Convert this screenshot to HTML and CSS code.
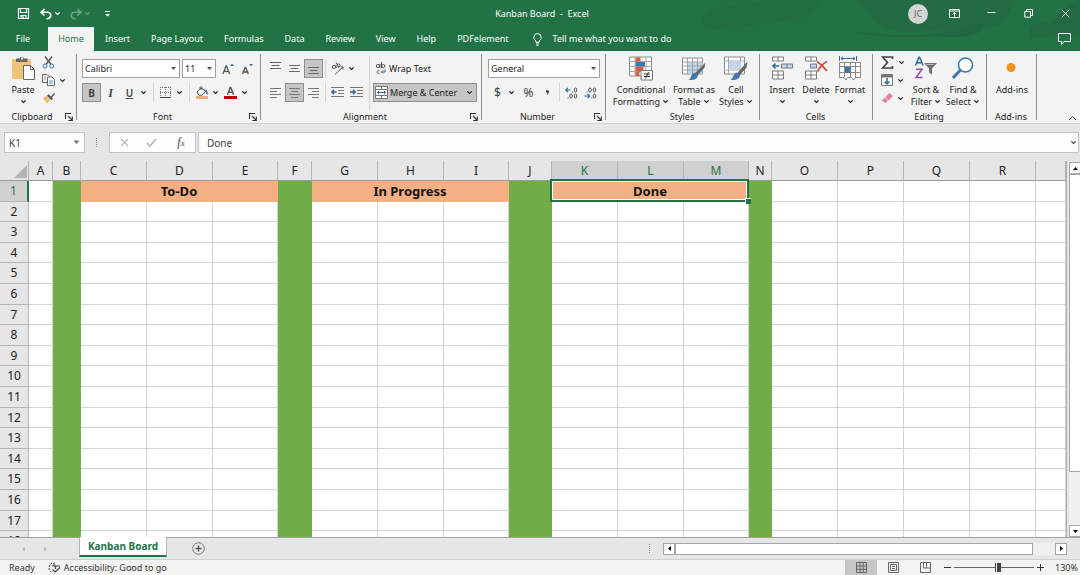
FILE: index.html
```html
<!DOCTYPE html>
<html lang="en">
<head>
<meta charset="utf-8">
<title>Kanban Board - Excel</title>
<link rel="stylesheet" href="styles.css">
</head>
<body>
<svg class="sprite" aria-hidden="true">
  <symbol id="chev" viewBox="0 0 7 7"><path d="M1.300 2.300 3.500 4.500 5.700 2.300" fill="none" stroke="currentColor" stroke-width="1.200"/></symbol>
  <symbol id="tri" viewBox="0 0 7 7"><path d="M1 2h5L3.500 5z" fill="currentColor"/></symbol>
  <symbol id="launch" viewBox="0 0 8 8"><path d="M.5 6V.5H6M3 3l4 4M7.300 3.500v4h-4" fill="none" stroke="#333" stroke-width="1.100"/></symbol>
</svg>

<header class="top">
  <svg class="swirl" viewBox="0 0 400 50" aria-hidden="true">
    <path d="M24 28C18 5 40 8 60 5L90 0h50c-10 10 0 16-25 20S60 26 24 31z" fill="#216e43"/>
    <path d="M174 0h160l-8 20c-20 16-60 8-96 12-24 0-42-12-38-18z" fill="#236b42"/>
    <path d="M172 31c30 5 70 6 90 1 18-7 38-9 40-9 6 5-4 13-22 14H222c-20-1-42-3-50-6z" fill="#206841"/>
    <path d="M350 38c-3-16 14-20 20-12 10-12 12-20 30-26v36c-20-4-30 3-50 2z" fill="#236b42"/>
  </svg>
  <div class="titlebar">
    <div class="quick">
      <button aria-label="Save"><svg width="13" height="13" viewBox="0 0 13 13" fill="none" stroke="#fff" stroke-width="1.200"><path d="M1.500 1.500h10v10h-10zM3.500 1.500v4h6v-4M4 11.500v-3h5v3M6 9v2"/></svg></button>
      <button aria-label="Undo"><svg width="14" height="12" viewBox="0 0 14 12" fill="none" stroke="#fff" stroke-width="1.600"><path d="M5.500 1 2 4.300l3.500 3.200M2 4.300h6.500c4.500 0 4.500 6-1 6.500"/></svg><svg class="chev"><use href="#chev"/></svg></button>
      <button class="faded" aria-label="Redo"><svg width="14" height="12" viewBox="0 0 14 12" fill="none" stroke="#fff" stroke-width="1.600"><path d="M8.500 1 12 4.300 8.500 7.500M12 4.300H5.500C1 4.300 1 10.300 6.500 10.800"/></svg><svg class="chev"><use href="#chev"/></svg></button>
      <button aria-label="Customize quick access"><svg width="7" height="8" viewBox="0 0 7 8"><path d="M1 1.500h5" stroke="#fff"/><path d="M1 4h5L3.500 6.500z" fill="#fff"/></svg></button>
    </div>
    <h1>Kanban Board &nbsp;- &nbsp;Excel</h1>
    <div class="window">
      <button class="avatar">JC</button>
      <button aria-label="Ribbon display"><svg width="11" height="9" viewBox="0 0 11 9" fill="none" stroke="#fff"><path d="M.5.500h10v8H.5zM.5 2h10M5.500 7.500v-4M3.700 5.200l1.800-1.700 1.800 1.700"/></svg></button>
      <button aria-label="Minimize"><svg width="9" height="9" viewBox="0 0 9 9"><path d="M.5 3.500h8" stroke="#fff"/></svg></button>
      <button aria-label="Restore"><svg width="9" height="9" viewBox="0 0 9 9" fill="none" stroke="#fff"><path d="M.8 2.500h5.700v5.700H.8zM2.500 2.500v-2h6v6h-2"/></svg></button>
      <button aria-label="Close"><svg width="9" height="9" viewBox="0 0 9 9"><path d="m.7.700 7.600 7.600M8.300.7.700 8.300" stroke="#fff"/></svg></button>
    </div>
  </div>
  <nav class="tabs">
    <button class="file">File</button>
    <button class="active">Home</button>
    <button>Insert</button>
    <button>Page Layout</button>
    <button>Formulas</button>
    <button>Data</button>
    <button>Review</button>
    <button>View</button>
    <button>Help</button>
    <button>PDFelement</button>
    <button class="tell"><svg width="9" height="13" viewBox="0 0 9 13" fill="none" stroke="#fff"><path d="M3 9.500V8C1.500 6.800.8 6 .8 4.300a3.700 3.700 0 0 1 7.400 0C8.200 6 7.500 6.800 6 8v1.500zM3 11h3M3.500 12.500h2"/></svg>Tell me what you want to do</button>
    <button class="comment" aria-label="Comments"><svg width="13" height="12" viewBox="0 0 13 12" fill="none" stroke="#fff"><path d="M.5.500h12v8H6l-2.500 3v-3h-3z"/></svg></button>
  </nav>
</header>

<section class="ribbon">
  <div class="group clipboard">
    <div class="tools">
      <button class="big paste"><svg width="24" height="25" viewBox="0 0 24 25"><path d="M1 3h19v20H1z" fill="#efc476"/><path d="M5 6V2.500h3.500a2.300 2.300 0 0 1 4.500 0h3.500V6z" fill="#666"/><path d="M10 1.500h2v2h-2z" fill="#f3f3f3"/><path d="M12.500 9.500h7l4 4v10h-11z" fill="#fff" stroke="#666"/><path d="M19.500 9.500v4h4" fill="none" stroke="#666"/></svg><span>Paste</span><svg class="chev"><use href="#chev"/></svg></button>
      <div class="stack">
        <button aria-label="Cut"><svg width="13" height="13" viewBox="0 0 13 13" fill="none"><path d="M3 .500 9 8.500M10 .500 4 8.500" stroke="#555" stroke-width="1.400"/><circle cx="3" cy="10" r="2" stroke="#41719c"/><circle cx="9.800" cy="10" r="2" stroke="#41719c"/></svg></button>
        <button aria-label="Copy"><svg width="13" height="12" viewBox="0 0 13 12" fill="#fff" stroke="#666"><path d="M.5.500H5l2 2v6H.5z"/><path d="M5.500 3h4.500l2.500 2.500v6h-7z"/><path d="M7 7h4M7 9h4M2 3h2M2 5h2" stroke="#5b87b5"/></svg><svg class="chev"><use href="#chev"/></svg></button>
        <button aria-label="Format Painter"><svg width="13" height="12" viewBox="0 0 13 12"><path d="m1 6 4-2.500L8.500 8 5 11.500z" fill="#e9bd74"/><path d="m5 3.500 1.500-1.300L9 4.500 12 1l1 1-3 3.500 1 1.500-2 1z" fill="#555"/></svg></button>
      </div>
    </div>
    <footer><span>Clipboard</span><button aria-label="Clipboard options"><svg class="launch"><use href="#launch"/></svg></button></footer>
  </div>

  <div class="group font">
    <div class="tools rows">
      <div class="row">
        <div class="drop name"><select aria-label="Font"><option>Calibri</option></select><svg class="tri"><use href="#tri"/></svg></div>
        <div class="drop size"><select aria-label="Font size"><option>11</option></select><svg class="tri"><use href="#tri"/></svg></div>
        <button class="ic" aria-label="Increase font size"><svg width="12" height="12" viewBox="0 0 12 12" fill="none"><path d="M1 11 4 3h.6L7.600 11M2.300 8.300h4" stroke="#555" stroke-width="1.300"/><path d="M8 3h4L10 .800z" fill="#41719c"/></svg></button>
        <button class="ic" aria-label="Decrease font size"><svg width="12" height="12" viewBox="0 0 12 12" fill="none"><path d="M1.500 11 4.200 4.500h.5L7.400 11M2.700 9h3.600" stroke="#555" stroke-width="1.300"/><path d="M8 1h4l-2 2.200z" fill="#41719c"/></svg></button>
      </div>
      <div class="row">
        <button class="ic on"><b>B</b></button>
        <button class="ic serif"><i>I</i></button>
        <button class="ic"><u>U</u></button><button class="more" aria-label="Underline options"><svg class="chev"><use href="#chev"/></svg></button>
        <span class="sep"></span>
        <button class="ic" aria-label="Borders"><svg width="11" height="11" viewBox="0 0 11 11" fill="none" stroke="#777"><path d="M.5 0v10M5.500 0v10M10.500 0v10M0 .500h11M0 5.500h11" stroke-dasharray="1 1"/><path d="M0 10.500h11" stroke="#444"/></svg></button><button class="more" aria-label="Border options"><svg class="chev"><use href="#chev"/></svg></button>
        <span class="sep"></span>
        <button class="ic" aria-label="Fill color"><svg width="14" height="13" viewBox="0 0 14 13"><path d="m2 6 4-4 4.500 3.500L7 9.200H4z" fill="#fff" stroke="#555"/><path d="M5 4V1.500c0-1 2-1 2 0V4" fill="none" stroke="#555"/><path d="M9 3.500c3 0 4 2 3.800 5.500-1.700-1-2-3-3.800-5.500z" fill="#41719c"/><path d="M1 10h12v3H1z" fill="#eaae87"/></svg></button><button class="more" aria-label="Fill options"><svg class="chev"><use href="#chev"/></svg></button>
        <button class="ic next" aria-label="Font color"><svg width="13" height="13" viewBox="0 0 13 13"><path d="M3.500 8.700 6.200 1.500h.6l2.700 7.200M4.500 6.400h4" fill="none" stroke="#555" stroke-width="1.400"/><path d="M0 10h13v3H0z" fill="#c00000"/></svg></button><button class="more" aria-label="Font color options"><svg class="chev"><use href="#chev"/></svg></button>
      </div>
    </div>
    <footer><span>Font</span><button aria-label="Font options"><svg class="launch"><use href="#launch"/></svg></button></footer>
  </div>

  <div class="group align">
    <div class="tools">
      <div class="rows">
        <div class="row">
          <button class="ic" aria-label="Top align"><svg width="11" height="13" viewBox="0 0 11 13" stroke="#666"><path d="M0 .500h11M1.500 3.500h8M0 6.500h11"/></svg></button>
          <button class="ic" aria-label="Middle align"><svg width="11" height="13" viewBox="0 0 11 13" stroke="#666"><path d="M0 3.500h11M1.500 6.500h8M0 9.500h11"/></svg></button>
          <button class="ic on" aria-label="Bottom align"><svg width="11" height="13" viewBox="0 0 11 13" stroke="#666"><path d="M0 5.500h11M1.500 8.500h8M0 11.500h11"/></svg></button>
          <span class="sep"></span>
          <button class="ic" aria-label="Orientation"><svg width="13" height="13" viewBox="0 0 13 13" fill="none" stroke="#555"><circle cx="3" cy="5" r="1.600"/><path d="m3.500 2.800 2 3M5 .800l3.200 4.500"/><circle cx="7.500" cy="3.500" r="1.600"/><path d="M4 12.500 12 5M9.500 5H12v2.500"/></svg></button><button class="more" aria-label="Orientation options"><svg class="chev"><use href="#chev"/></svg></button>
        </div>
        <div class="row">
          <button class="ic" aria-label="Align left"><svg width="11" height="10" viewBox="0 0 11 10" stroke="#777"><path d="M0 .500h11M0 3.500h7M0 6.500h11M0 9.500h7"/></svg></button>
          <button class="ic on" aria-label="Center"><svg width="11" height="10" viewBox="0 0 11 10" stroke="#777"><path d="M0 .500h11M2 3.500h7M0 6.500h11M2 9.500h7"/></svg></button>
          <button class="ic" aria-label="Align right"><svg width="11" height="10" viewBox="0 0 11 10" stroke="#777"><path d="M0 .500h11M4 3.500h7M0 6.500h11M4 9.500h7"/></svg></button>
          <span class="sep"></span>
          <button class="ic" aria-label="Decrease indent"><svg width="13" height="11" viewBox="0 0 13 11" fill="none" stroke="#777"><path d="M0 .500h13M7 3.500h6M7 6.500h6M0 9.500h13"/><path d="M5.500 5H1M3 2.800.8 5 3 7.200" stroke="#2f66a0" stroke-width="1.500"/></svg></button>
          <button class="ic" aria-label="Increase indent"><svg width="13" height="11" viewBox="0 0 13 11" fill="none" stroke="#777"><path d="M0 .500h13M7 3.500h6M7 6.500h6M0 9.500h13"/><path d="M0 5h5M3 2.800 5.200 5 3 7.200" stroke="#2f66a0" stroke-width="1.500"/></svg></button>
        </div>
      </div>
      <div class="rows wrapcol">
        <button class="wide"><svg width="12" height="13" viewBox="0 0 12 13" fill="none" stroke="#555"><circle cx="3" cy="4" r="1.600"/><path d="M5 2v4M6.500 0v6"/><circle cx="8.300" cy="4" r="1.600"/><path d="M4.500 8.700c-3-1.200-3 3.600 0 2.600"/><path d="M10 7.500V10H6.500M8 8.500 6.500 10 8 11.500" stroke="#2f66a0"/></svg>Wrap Text</button>
        <button class="wide on"><svg width="13" height="13" viewBox="0 0 13 13" fill="#fff" stroke="#777"><path d="M.5.500h12v12H.5zM.5 3.500h12M.5 9.500h12M6.500.500v3M6.500 9.500v3"/><path d="M2.500 6.500h8M4 5 2.500 6.500 4 8M9 5l1.500 1.500L9 8" fill="none" stroke="#2f66a0"/></svg>Merge &amp; Center<svg class="chev last"><use href="#chev"/></svg></button>
      </div>
    </div>
    <footer><span>Alignment</span><button aria-label="Alignment options"><svg class="launch"><use href="#launch"/></svg></button></footer>
  </div>

  <div class="group number">
    <div class="tools rows">
      <div class="row"><div class="drop format"><select aria-label="Number format"><option>General</option></select><svg class="tri"><use href="#tri"/></svg></div></div>
      <div class="row">
        <button class="ic sym">$</button><button class="more" aria-label="Currency options"><svg class="chev"><use href="#chev"/></svg></button>
        <button class="ic sym pct">%</button>
        <button class="ic comma" aria-label="Comma style"><svg width="5" height="7" viewBox="0 0 5 7"><path d="M1 1.500C2 .500 4 .800 4 2.500 4 4.500 3 5.500 1.500 6c.8-1 1-1.500 1-2C1.500 4 .500 2.800 1 1.500z" fill="#444"/></svg></button>
        <span class="sep slim"></span>
        <button class="ic" aria-label="Increase decimal"><svg width="13" height="12" viewBox="0 0 13 12" fill="none" stroke="#555"><path d="M5.500 3H.8M3 .800.8 3 3 5.200" stroke="#2f66a0" stroke-width="1.200"/><ellipse cx="10.500" cy="3" rx="1.300" ry="2"/><ellipse cx="6" cy="9" rx="1.300" ry="2"/><ellipse cx="10.500" cy="9" rx="1.300" ry="2"/><path d="M7 5h1M2.500 11h1"/></svg></button>
        <button class="ic" aria-label="Decrease decimal"><svg width="13" height="12" viewBox="0 0 13 12" fill="none" stroke="#555"><path d="M.5 9h5M3.500 6.800 5.700 9l-2.200 2.200" stroke="#2f66a0" stroke-width="1.200"/><ellipse cx="6" cy="3" rx="1.300" ry="2"/><ellipse cx="10.500" cy="3" rx="1.300" ry="2"/><ellipse cx="10.500" cy="9" rx="1.300" ry="2"/><path d="M2.500 5h1M7.300 11h1"/></svg></button>
      </div>
    </div>
    <footer><span>Number</span><button aria-label="Number options"><svg class="launch"><use href="#launch"/></svg></button></footer>
  </div>

  <div class="group styles">
    <div class="tools">
      <button class="big w60"><svg width="24" height="24" viewBox="0 0 24 24"><path d="M.5.500h22v19H.5z" fill="#fff" stroke="#8a8a8a"/><path d="M.5 5h22M.5 10h22M.5 15h22M6 .500v19M17 .500v19" stroke="#aaa"/><path d="M6.500 1h5v4h-5zM6.500 10.500h8V15h-8zM6.500 15.500h4v4h-4z" fill="#cf5f46"/><path d="M6.500 5.500H16v4.500H6.500z" fill="#3f78ae"/><path d="M12 14h11.500v9.500H12z" fill="#fff" stroke="#777"/><path d="M15 17.500h6M15 20h6M19.500 15.500l-3 6.500" stroke="#333"/></svg><span>Conditional<br>Formatting <svg class="chev"><use href="#chev"/></svg></span></button>
      <button class="big w46"><svg width="24" height="24" viewBox="0 0 24 24"><path d="M.5 1.500h20v16H.5z" fill="#fff" stroke="#8a8a8a"/><path d="M5.500 5.500h15v12h-15z" fill="#c3d5e9"/><path d="M.5 5.500h20M.5 9.500h20M.5 13.500h20M5.500 1.500v16M10.500 1.500v16M15.500 1.500v16" stroke="#9aa4ae"/><path d="m23.500 6-1 5-7 8-2.500-2.300z" fill="#666"/><path d="m12.500 16 3.500 3c-1 4-5 5-9.500 4.500 3-1.500 2.500-6.500 6-7.500z" fill="#3f78ae"/></svg><span>Format as<br>Table <svg class="chev"><use href="#chev"/></svg></span></button>
      <button class="big w36"><svg width="24" height="24" viewBox="0 0 24 24"><path d="M.5.500h20v17H.5z" fill="#fff" stroke="#8a8a8a"/><path d="M.5 4.500h20M.5 13.500h20M4.500.500v17M16.500.500v17" stroke="#aaa"/><path d="M5 5h12v8H5z" fill="#c3d5e9"/><path d="m23.500 5-1 6-7 8-2.500-2.300z" fill="#666"/><path d="m12.500 16 3.500 3c-1 4-5 5-9.500 4.500 3-1.500 2.500-6.500 6-7.500z" fill="#3f78ae"/></svg><span>Cell<br>Styles <svg class="chev"><use href="#chev"/></svg></span></button>
    </div>
    <footer><span>Styles</span></footer>
  </div>

  <div class="group cells">
    <div class="tools">
      <button class="big w34"><svg width="22" height="24" viewBox="0 0 22 24" fill="#fff" stroke="#7b7b7b"><path d="M1.500.500h11v4h-11zM7 .500v4M1.500 14.500h11v8h-11zM7 14.500v8M1.500 18.500h11"/><path d="M10.500 7.500h11v4h-11zM16 7.500v4" fill="#c3d5e9"/><path d="M8 9.500H2M4.500 7 2 9.500 4.500 12" fill="none" stroke="#2f66a0" stroke-width="1.500"/></svg><span>Insert</span><svg class="chev"><use href="#chev"/></svg></button>
      <button class="big w34"><svg width="24" height="24" viewBox="0 0 24 24" fill="#fff" stroke="#7b7b7b"><path d="M1.500.500h11v4h-11zM7 .500v4M1.500 14.500h11v8h-11zM7 14.500v8M1.500 18.500h11"/><path d="M6.500 7.500h6v4h-6z" fill="#c3d5e9"/><path d="M13 5c3 2 7 5.500 10 9.500M23 5c-4 2-7 5.500-9.500 10" fill="none" stroke="#cf5038" stroke-width="1.800"/></svg><span>Delete</span><svg class="chev"><use href="#chev"/></svg></button>
      <button class="big w34"><svg width="24" height="25" viewBox="0 0 24 25" fill="#fff" stroke="#8a8a8a"><path d="M1.500 6.500h21v15h-5l-2 2.500-2-2.500h-4L8 24l-2-2.500H1.500z"/><path d="M1.500 10.500h21M1.500 16.500h21M6.500 6.500v15M12.500 6.500v15M17.500 6.500v15"/><path d="M7 11h5.500v6H7z" fill="#3f78ae" stroke="none"/><path d="M1.500 0v5M18.500 0v5M3 2.500h14M5 .800 3 2.500 5 4.200M15 .800l2 1.700-2 1.700" fill="none" stroke="#2f66a0"/></svg><span>Format</span><svg class="chev"><use href="#chev"/></svg></button>
    </div>
    <footer><span>Cells</span></footer>
  </div>

  <div class="group editing">
    <div class="tools">
      <div class="stack">
        <button aria-label="AutoSum"><svg width="13" height="13" viewBox="0 0 13 13" fill="none"><path d="M11.500 3V1H1.500l5 5.500-5 5.500h10v-2" stroke="#444" stroke-width="1.700"/></svg><svg class="chev"><use href="#chev"/></svg></button>
        <button aria-label="Fill"><svg width="12" height="12" viewBox="0 0 12 12" fill="#fff" stroke="#777"><path d="M.5.500h11v11H.5z"/><path d="M1 1h10v2H1z" fill="#777"/><path d="M6 4v6M3.500 7.500 6 10l2.500-2.500" fill="none" stroke="#2f66a0" stroke-width="1.500"/></svg><svg class="chev"><use href="#chev"/></svg></button>
        <button aria-label="Clear"><svg width="12" height="12" viewBox="0 0 12 12"><path d="m4.500 5 4-4L12 4 7.500 8.500z" fill="#e5809a"/><path d="m4 5.500 3 3L4.500 11 1 8.500z" fill="#d9839b"/></svg><svg class="chev"><use href="#chev"/></svg></button>
      </div>
      <button class="big w36"><svg width="24" height="24" viewBox="0 0 24 24" fill="none"><path d="M1.500 9 5 .800h.6L9 9M2.700 6.200h5" stroke="#2f66a0" stroke-width="1.500"/><path d="M2 12.700h6L2 21h6.500" stroke="#8d4fa8" stroke-width="1.500"/><path d="M10 6.500h13l-5 5.500v6l-3-2v-4z" fill="#707070"/><path d="M12.500 8h7" stroke="#bbb"/></svg><span>Sort &amp;<br>Filter <svg class="chev"><use href="#chev"/></svg></span></button>
      <button class="big w36"><svg width="24" height="24" viewBox="0 0 24 24" fill="none" stroke="#3f78ae"><circle cx="14.500" cy="8.500" r="7" fill="#fdfdfd" stroke-width="1.600"/><path d="m9.500 13.500-7.500 8" stroke-width="3"/></svg><span>Find &amp;<br>Select <svg class="chev"><use href="#chev"/></svg></span></button>
    </div>
    <footer><span>Editing</span></footer>
  </div>

  <div class="group addins">
    <div class="tools">
      <button class="big"><svg width="24" height="24" viewBox="0 0 24 24"><circle cx="11" cy="11" r="4.500" fill="#f0941f"/></svg><span>Add-ins</span></button>
    </div>
    <footer><span>Add-ins</span></footer>
  </div>
  <button class="collapse" aria-label="Collapse ribbon"><svg width="9" height="6" viewBox="0 0 9 6"><path d="m1 5 3.500-3.500L8 5" fill="none" stroke="#444"/></svg></button>
</section>

<section class="formula">
  <div class="namebox"><input aria-label="Name box" value="K1"><svg width="7" height="7" viewBox="0 0 7 7"><path d="M.5 1.500h6L3.500 5z" fill="#777"/></svg></div>
  <span class="grip"></span>
  <div class="fx">
    <button aria-label="Cancel"><svg width="9" height="9" viewBox="0 0 9 9"><path d="m1 1 7 7M8 1 1 8" stroke="#bbb" stroke-width="1.300"/></svg></button>
    <button aria-label="Enter"><svg width="11" height="9" viewBox="0 0 11 9"><path d="m1 5 3 3 6-7" fill="none" stroke="#b5b5b5" stroke-width="1.500"/></svg></button>
    <button class="fn"><i>f<small>x</small></i></button>
  </div>
  <div class="entry"><input aria-label="Formula bar" value="Done"><svg class="chev"><use href="#chev"/></svg></div>
</section>

<main class="sheet">
  <div class="gridwrap">
    <table>
      <colgroup>
        <col class="c29"><col class="c24"><col class="c28"><col class="c66"><col class="c66"><col class="c65"><col class="c34"><col class="c66"><col class="c66"><col class="c65"><col class="c43"><col class="c66"><col class="c66"><col class="c65"><col class="c23"><col class="c66"><col class="c66"><col class="c66"><col class="c66"><col>
      </colgroup>
      <thead><tr>
        <th class="corner" aria-label="Select all"><svg width="13" height="13" viewBox="0 0 13 13"><path d="M13 0v13H0z" fill="#b4b4b4"/></svg></th>
        <th>A</th><th>B</th><th>C</th><th>D</th><th>E</th><th>F</th><th>G</th><th>H</th><th>I</th><th>J</th><th class="sel">K</th><th class="sel">L</th><th class="sel">M</th><th>N</th><th>O</th><th>P</th><th>Q</th><th>R</th><th></th>
      </tr></thead>
      <tbody id="rows">
        <tr class="heads"><th class="sel">1</th><td></td><td class="bar"></td><td colspan="3" class="title">To-Do</td><td class="bar"></td><td colspan="3" class="title">In Progress</td><td class="bar"></td><td colspan="3" class="title picked">Done</td><td class="bar"></td><td></td><td></td><td></td><td></td><td></td></tr>
      </tbody>
    </table>
  </div>
  <div class="vscroll">
    <button aria-label="Scroll up"><svg width="7" height="5" viewBox="0 0 7 5"><path d="M1 4h5L3.500 1z"/></svg></button>
    <div class="track"><div class="thumb"></div></div>
    <button aria-label="Scroll down"><svg width="7" height="5" viewBox="0 0 7 5"><path d="M1 1h5L3.500 4z"/></svg></button>
  </div>
</main>

<nav class="sheets">
  <button class="step" aria-label="Previous sheet"><svg width="5" height="6" viewBox="0 0 5 6"><path d="M4 .500v5L1 3z" fill="#bbb"/></svg></button>
  <button class="step" aria-label="Next sheet"><svg width="5" height="6" viewBox="0 0 5 6"><path d="M1 .500v5L4 3z" fill="#bbb"/></svg></button>
  <button class="sheettab">Kanban Board</button>
  <button class="add" aria-label="New sheet"><svg width="13" height="13" viewBox="0 0 13 13" fill="none" stroke="#777"><circle cx="6.500" cy="6.500" r="5.800"/><path d="M3.500 6.500h6M6.500 3.500v6" stroke="#555" stroke-width="1.400"/></svg></button>
  <span class="grip"></span>
  <div class="hscroll">
    <button aria-label="Scroll left"><svg width="5" height="7" viewBox="0 0 5 7"><path d="M4 1v5L1 3.500z"/></svg></button>
    <div class="thumb"></div>
    <button aria-label="Scroll right"><svg width="5" height="7" viewBox="0 0 5 7"><path d="M1 1v5l3-2.500z"/></svg></button>
  </div>
</nav>

<footer class="status">
  <span class="ready">Ready</span>
  <span class="access"><svg width="13" height="12" viewBox="0 0 13 12" fill="none" stroke="#444"><path d="M4 1C.5 3-.5 8 4 10.500" stroke-dasharray="2 1"/><path d="M6 .500v3M4 4h8M7.500 4v3M4.500 7.500l2.500 2.500M7 10l5-4.500" stroke-width="1.200"/></svg>Accessibility: Good to go</span>
  <button class="view on" aria-label="Normal view"><svg width="11" height="11" viewBox="0 0 11 11" fill="none" stroke="#666"><path d="M.5.500h10v10H.5zM4 .500v10M7.300.500v10M.5 4h10M.5 7.300h10"/></svg></button>
  <button class="view" aria-label="Page layout view"><svg width="11" height="11" viewBox="0 0 11 11" fill="none" stroke="#666"><path d="M.5.500h10v10H.5zM2.500 2.500h6v6h-6zM4 4.500h3M4 6.500h3"/></svg></button>
  <button class="view" aria-label="Page break view"><svg width="11" height="11" viewBox="0 0 11 11" fill="none" stroke="#666"><path d="M.5.500h10v10H.5zM3.500.500v5.500h7M6.500.500v5.500"/></svg></button>
  <button class="zoom" aria-label="Zoom out"><svg width="7" height="7" viewBox="0 0 7 7"><path d="M0 3.500h7" stroke="#333"/></svg></button>
  <input type="range" min="10" max="190" value="111" aria-label="Zoom">
  <button class="zoom" aria-label="Zoom in"><svg width="7" height="7" viewBox="0 0 7 7"><path d="M0 3.500h7M3.500 0v7" stroke="#333"/></svg></button>
  <span class="level">130%</span>
</footer>
<script src="script.js"></script>
</body>
</html>
```
FILE: styles.css
```css
* { box-sizing: border-box; }
html, body { height: 100%; }
body {
  margin: 0;
  display: flex;
  flex-direction: column;
  overflow: hidden;
  background: #e6e6e6;
  color: #333;
  font: 9px/12px "Noto Sans", "Open Sans", sans-serif;
}
button, input, select { font: inherit; color: inherit; }
button { border: 0; padding: 0; background: none; display: flex; align-items: center; justify-content: center; white-space: nowrap; }
svg { flex: none; display: block; }
.sprite { position: absolute; width: 0; height: 0; }
.chev, .tri { width: 7px; height: 7px; }
.launch { width: 8px; height: 8px; }

/* Title bar and tabs */
.top { position: relative; flex: none; background: #217346; color: #fff; border-bottom: 1px solid #1c6a3d; }
.swirl { position: absolute; right: 0; top: 0; width: 400px; height: 50px; }
.titlebar { position: relative; display: grid; grid-template-columns: 1fr auto 1fr; align-items: center; height: 27px; padding-left: 4px; }
.titlebar h1 { margin: 0; font-size: 9px; font-weight: 400; }
.quick { display: flex; gap: 8px; padding-left: 11px; }
.quick button { gap: 1px; min-width: 16px; }
.quick .faded { opacity: .35; }
.window { display: flex; justify-content: flex-end; align-items: center; height: 27px; padding-right: 6px; }
.window button { width: 18px; height: 18px; margin-left: 19px; }
.window .avatar { width: 20px; height: 20px; border-radius: 50%; background: #d5d5d5; color: #666; font-size: 9px; margin-right: -2px; }
.tabs { position: relative; display: flex; gap: 1px; height: 23px; padding-left: 8px; }
.tabs button { padding: 0 10px; height: 24px; }
.tabs .file { width: 30px; margin-right: 9px; }
.tabs .active { background: #f3f3f3; color: #217346; width: 46px; }
.tabs .tell { gap: 11px; padding-left: 13px; }
.tabs .comment { margin-left: auto; padding-right: 9px; }

/* Ribbon */
.ribbon { flex: none; display: flex; background: #f3f3f3; border-bottom: 1px solid #d2d2d2; color: #222; }
.group { display: flex; flex-direction: column; position: relative; flex: none; }
.group::after { content: ""; position: absolute; right: 0; top: 3px; bottom: 3px; width: 1px; background: #8e8e8e; }
.tools { display: flex; height: 60px; padding-top: 5px; }
.group footer { display: flex; align-items: center; height: 12px; padding-right: 2px; }
.group footer span { flex: 1; text-align: center; }
.group footer button { width: 10px; height: 10px; }
.clipboard { width: 77px; }
.clipboard footer { padding-right: 3px; }
.font { width: 184px; }
.font footer, .align footer, .number footer { padding-right: 3px; }
.align { width: 221px; }
.number { width: 124px; }
.styles { width: 154px; }
.cells { width: 113px; }
.editing { width: 114px; }
.addins { width: 50px; }

.big { flex-direction: column; justify-content: flex-start; flex: none; text-align: center; }
.big span { margin-top: 3px; }
.big > .chev { margin-top: 2px; }
.big span .chev { display: inline-block; }
.big > svg:first-child { height: 25px; }
.w60 { width: 58px; }
.w46 { width: 48px; }
.w36 { width: 36px; }
.w34 { width: 34px; }
.paste { width: 30px; }
.clipboard .tools { padding-left: 8px; gap: 4px; }
.styles .tools { padding-left: 6px; }
.cells .tools { padding-left: 5px; }
.editing .tools { padding-left: 8px; gap: 1px; }
.addins .tools { justify-content: center; }
.stack { display: flex; flex-direction: column; width: 26px; }
.stack button { height: 18px; gap: 4px; justify-content: flex-start; margin-top: -3px; margin-bottom: 3px; }

.rows { display: flex; flex-direction: column; gap: 5px; }
.tools > .rows { padding-top: 3px; }
.tools.rows { padding-top: 8px; }
.row { display: flex; align-items: center; height: 19px; }
.font .tools { padding-left: 5px; }
.align .tools { padding-left: 5px; }
.number .tools { padding-left: 6px; }
.ic { width: 19px; height: 19px; }
.ic b, .ic u, .ic i { font-size: 10px; color: #444; }
.ic u { font-weight: 600; }
.ic.serif i { font-family: "Liberation Serif", serif; font-size: 12px; font-weight: 700; }
.on { background: #c6c6c6; outline: 1px solid #8f8f8f; outline-offset: -1px; }
.more { width: 8px; height: 19px; }
.next { margin-left: 2px; }
.sep { width: 1px; height: 19px; margin: 0 2px 0 6px; background: #d4d4d4; }
.align .sep { margin: 0 2px; }
.sep.slim { margin: 0 2px; }
.sym { font-size: 12px; color: #444; }
.sym.pct { margin-left: 4px; }
.drop { position: relative; height: 19px; border: 1px solid #a0a0a0; background: #fff; margin-right: 2px; }
.drop select { appearance: none; border: 0; background: none; width: 100%; height: 17px; padding: 0 2px; display: block; }
.drop .tri { position: absolute; right: 2px; top: 5px; color: #555; pointer-events: none; }
.name { width: 98px; }
.size { width: 34px; }
.format { width: 112px; }
.wrapcol { border-left: 1px solid #d4d4d4; padding-left: 3px; margin-left: auto; margin-right: 5px; }
.wide { height: 19px; width: 104px; gap: 2px; justify-content: flex-start; padding-left: 2px; }
.wide .last { margin-left: auto; margin-right: 4px; }
.collapse { margin: auto 3px 2px auto; }

/* Formula bar */
.formula { flex: none; display: flex; height: 37px; padding: 8px 1px 8px 4px; color: #444; }
.formula > div { height: 21px; background: #fdfdfd; border: 1px solid #c3c3c3; display: flex; align-items: center; }
.formula input { border: 0; background: none; min-width: 0; flex: 1; padding: 0; font-size: 10px; outline: 0; }
.namebox { width: 81px; padding: 0 4px; }
.grip { width: 2px; height: 9px; border-left: 1px dotted #888; }
.formula .grip { margin: 6px 11px 0; }
.formula .fx { width: 87px; justify-content: space-between; padding: 0 6px 0 10px; }
.fn { width: 16px; font: 12px/12px "Liberation Serif", serif; }
.fn small { font-size: 9px; }
.formula .entry { flex: 1; margin-left: 2px; padding: 0 1px 0 8px; }

/* Worksheet */
.sheet { flex: 1; min-height: 0; display: flex; border-bottom: 1px solid #a0a0a0; }
.gridwrap { flex: 1; min-width: 0; overflow: hidden; border-right: 1px solid #ababab; }
table { table-layout: fixed; width: 100%; border-collapse: separate; border-spacing: 0; background: #fff; color: #222; font-size: 12px; line-height: 16px; }
th, td { padding: 0; border: 0 solid #d4d4d4; border-width: 0 1px 1px 0; text-align: center; overflow: visible; }
th { background: #e6e6e6; font-weight: 400; border-color: #b5b5b5; }
thead th { height: 20px; border-bottom-color: #9b9b9b; }
.corner svg { margin: 2px 1px 0 auto; }
th.sel { background: #d0d0d0; color: #217346; }
thead th.sel { border-bottom-color: #217346; }
tbody th.sel { border-right: 2px solid #217346; }
tbody tr { height: 21px; }
tbody tr:nth-child(5n+2), tbody tr:nth-child(5n+4) { height: 20px; }
.bar { background: #70ad47; border-color: #70ad47; }
.title { background: #f4b084; border-color: #f4b084; font-size: 13px; font-weight: 700; color: #111; }
.picked { position: relative; }
.picked::before { content: ""; position: absolute; inset: -2px -1px -1px -2px; border: 2px solid #217346; box-shadow: inset 0 0 0 1px #fff; }
.picked::after { content: ""; position: absolute; right: -3px; bottom: -3px; width: 5px; height: 5px; background: #217346; border: 1px solid #fff; border-width: 1px 0 0 1px; }
.c23 { width: 23px; } .c24 { width: 24px; } .c28 { width: 28px; } .c29 { width: 29px; }
.c34 { width: 34px; } .c43 { width: 43px; } .c65 { width: 65px; } .c66 { width: 66px; }

.vscroll { width: 11px; margin-left: 2px; flex: none; display: flex; flex-direction: column; padding-top: 1px; }
.vscroll button { height: 12px; background: #fff; border: 1px solid #a6a6a6; border-right: 0; }
.track { flex: 1; background: #f0f0f0; }
.vscroll .thumb { height: 85%; background: #fff; border: 1px solid #a6a6a6; border-right: 0; }

/* Sheet tabs */
.sheets { flex: none; display: flex; align-items: center; height: 21px; padding-right: 13px; }
.step { width: 5px; margin-left: 21px; }
.step + .step { margin-left: 17px; }
.sheettab { align-self: flex-start; width: 88px; height: 20px; margin-left: 31px; margin-top: -1px; background: #fff; border: 1px solid #b5b5b5; border-top: 0; border-bottom: 2px solid #217346; color: #217346; font-size: 10px; font-weight: 700; }
.add { margin-left: 25px; }
.sheets .grip { margin-left: auto; margin-right: 12px; }
.hscroll { display: flex; width: 404px; height: 12px; justify-content: space-between; background: #f0f0f0; }
.hscroll button { width: 12px; background: #fff; border: 1px solid #a6a6a6; }
.hscroll .thumb { flex: 1; margin-right: 22px; background: #fff; border: 1px solid #a6a6a6; }

/* Status bar */
.status { flex: none; display: flex; align-items: center; height: 16px; background: #f3f3f3; border-top: 1px solid #d0d0d0; padding: 0 2px 0 9px; }
.access { display: flex; gap: 3px; align-items: center; margin: 0 auto 0 13px; }
.view { width: 32px; height: 15px; }
.view.on { outline: 0; }
.zoom { width: 9px; height: 15px; margin-left: 2px; }
.level { margin-left: 10px; }
.status input { appearance: none; width: 80px; height: 13px; margin: 0 0 0 2px; background: linear-gradient(#666, #666) center / 100% 1px no-repeat; }
.status input::-webkit-slider-thumb { appearance: none; width: 5px; height: 9px; background: #444; border: 0; border-left: 1px solid #f3f3f3; box-shadow: -1px 0 0 #444; }
```
FILE: script.js
```js
const body = document.getElementById("rows");
const dividers = [1, 5, 9, 13];
for (let n = 2; n <= 18; n++) {
  const row = body.insertRow();
  const head = document.createElement("th");
  head.textContent = n;
  row.append(head);
  for (let c = 0; c < 19; c++) {
    const cell = row.insertCell();
    if (dividers.includes(c)) cell.className = "bar";
  }
}
```
